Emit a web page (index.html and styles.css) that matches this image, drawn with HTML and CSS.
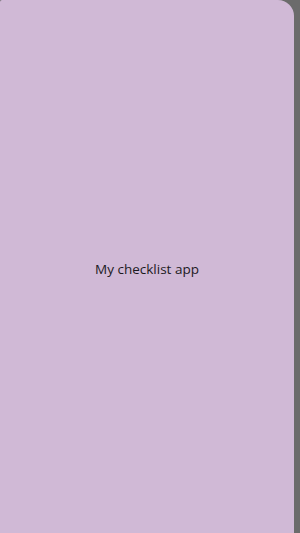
FILE: index.html
```html
<html>
<head>
<title>My checklist app</title>
<link rel="stylesheet" href="styles.css">
</head>
<body>
<div class="screen">
    <div class="drawer">
        <span class="title">My checklist app</span>
    </div>
</div>
</body>
</html>
```

FILE: styles.css
```css
html, body {
    margin: 0;
    padding: 0;
    height: 100%;
    overflow: hidden;
    background: #6b6b6b;
}
.screen {
    display: flex;
    height: 100%;
}
.drawer {
    width: 294px;
    height: 538px;
    flex: none;
    background: #d0b9d6;
    border-radius: 2px 16px 0 0;
    display: flex;
    align-items: center;
    justify-content: center;
}
.title {
    font-family: "Open Sans", sans-serif;
    font-size: 13.5px;
    color: #1c1a1e;
}
```
